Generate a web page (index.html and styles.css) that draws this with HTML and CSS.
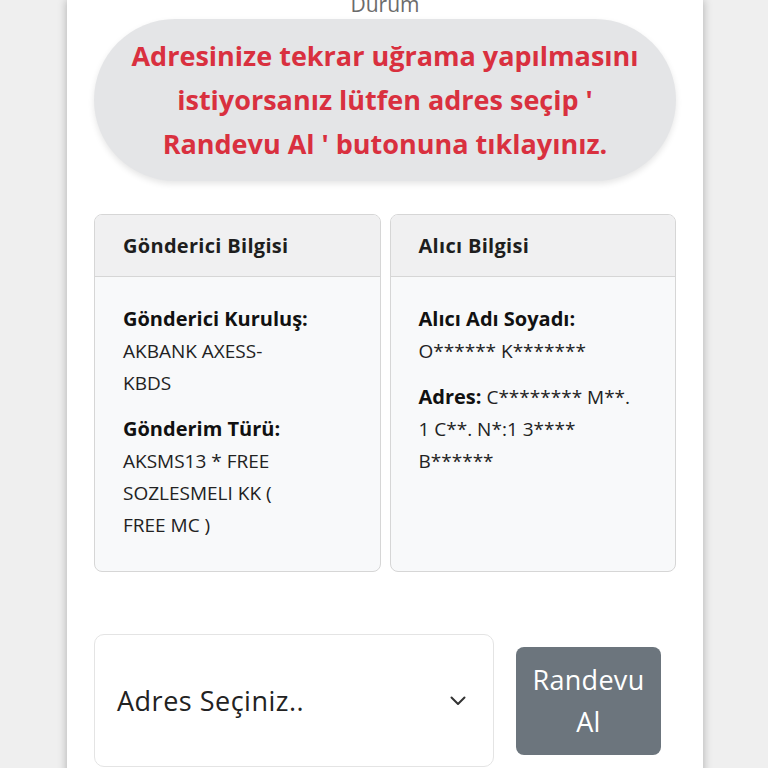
FILE: index.html
```html
<!DOCTYPE html>
<html lang="tr">
<head>
<meta charset="utf-8">
<title>Durum</title>
<link rel="stylesheet" href="styles.css">
</head>
<body>
<main class="panel">
  <div class="title">Durum</div>
  <div class="notice">Adresinize tekrar uğrama yapılmasını<br>istiyorsanız lütfen adres seçip '<br>Randevu Al ' butonuna tıklayınız.</div>
  <div class="cards">
    <section class="card">
      <div class="card-head">Gönderici Bilgisi</div>
      <div class="card-body">
        <p class="item"><b>Gönderici Kuruluş:</b><br>AKBANK AXESS-<br>KBDS</p>
        <p class="item"><b>Gönderim Türü:</b><br>AKSMS13 * FREE<br>SOZLESMELI KK (<br>FREE MC )</p>
      </div>
    </section>
    <section class="card">
      <div class="card-head">Alıcı Bilgisi</div>
      <div class="card-body">
        <p class="item"><b>Alıcı Adı Soyadı:</b><br>O****** K*******</p>
        <p class="item"><b>Adres:</b> C******** M**.<br>1 C**. N*:1 3****<br>B******</p>
      </div>
    </section>
  </div>
  <div class="actions">
    <div class="select">
      <span>Adres Seçiniz..</span>
      <svg class="chev" width="16" height="10" viewBox="0 0 16 10"><path d="M1.5 1.5 L8 8 L14.5 1.5" fill="none" stroke="#333" stroke-width="2" stroke-linecap="round" stroke-linejoin="round"/></svg>
    </div>
    <button class="btn">Randevu<br>Al</button>
  </div>
</main>
</body>
</html>
```
FILE: styles.css
```css
html, body {
  margin: 0;
  padding: 0;
  background: #efefef;
  height: 768px;
  overflow: hidden;
  font-family: "Open Sans", "Noto Sans", sans-serif;
}
.panel {
  width: 636px;
  margin-left: 67px;
  background: #ffffff;
  box-shadow: 0 0 9px rgba(0,0,0,0.28);
  min-height: 800px;
  padding: 0 27px;
  box-sizing: border-box;
  display: flex;
  flex-direction: column;
}
.title {
  margin-top: -9px;
  height: 26px;
  line-height: 26px;
  text-align: center;
  font-size: 21px;
  color: #6b6b6b;
}
.notice {
  margin-top: 2px;
  height: 162px;
  box-sizing: border-box;
  border-radius: 81px;
  background: #e4e5e7;
  box-shadow: 0 3px 6px rgba(0,0,0,0.10);
  color: #d9303f;
  font-weight: 700;
  font-size: 27px;
  line-height: 44px;
  text-align: center;
  display: flex;
  align-items: center;
  justify-content: center;
}
.cards {
  margin-top: 33px;
  display: grid;
  grid-template-columns: 1fr 1fr;
  gap: 9px;
}
.card {
  border: 1px solid #d6d6d6;
  border-radius: 8px;
  background: #f8f9fa;
  overflow: hidden;
  display: flex;
  flex-direction: column;
}
.card-head {
  height: 62px;
  box-sizing: border-box;
  background: #f0f0f1;
  border-bottom: 1px solid #d6d6d6;
  padding-left: 28px;
  display: flex;
  align-items: center;
  font-weight: 700;
  font-size: 20px;
  letter-spacing: 0.3px;
  color: #1e1e1e;
}
.card-body {
  padding: 26px 28px 30px;
  font-size: 19px;
  line-height: 32px;
  color: #222;
}
.item {
  margin: 0 0 14px;
}
.item:last-child { margin-bottom: 0; }
.item b { color: #111; font-weight: 700; font-size: 20px; }
.actions {
  margin-top: 62px;
  display: flex;
  align-items: center;
  gap: 22px;
}
.select {
  width: 400px;
  height: 133px;
  box-sizing: border-box;
  border: 1px solid #e4e4e4;
  border-radius: 10px;
  display: flex;
  align-items: center;
  justify-content: space-between;
  padding: 0 27px 0 22px;
  font-size: 27px;
  letter-spacing: 0.5px;
  color: #222;
}
.chev { display: block; }
.btn {
  width: 145px;
  height: 108px;
  border: none;
  border-radius: 8px;
  background: #6c757d;
  color: #ffffff;
  font-family: "Open Sans", "Noto Sans", sans-serif;
  font-size: 27px;
  letter-spacing: 0.3px;
  line-height: 42px;
  padding: 0;
  text-align: center;
}
```
